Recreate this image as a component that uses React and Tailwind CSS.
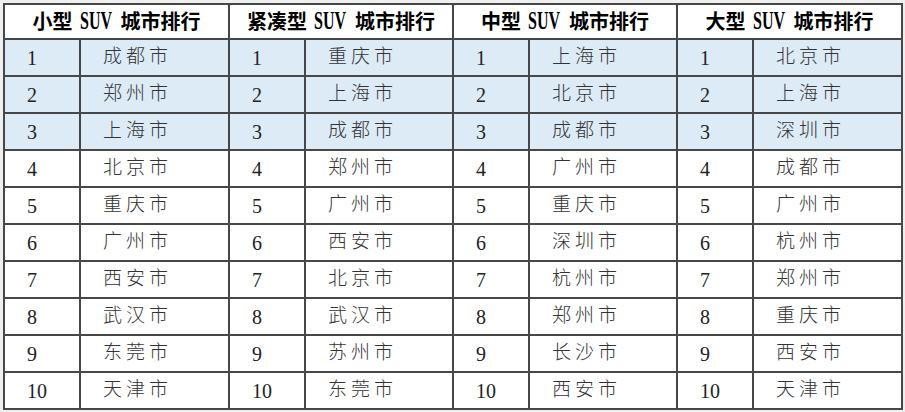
const groups = [
  {
    pre: "小型",
    cities: ["成都市", "郑州市", "上海市", "北京市", "重庆市", "广州市", "西安市", "武汉市", "东莞市", "天津市"],
  },
  {
    pre: "紧凑型",
    cities: ["重庆市", "上海市", "成都市", "郑州市", "广州市", "西安市", "北京市", "武汉市", "苏州市", "东莞市"],
  },
  {
    pre: "中型",
    cities: ["上海市", "北京市", "成都市", "广州市", "重庆市", "深圳市", "杭州市", "郑州市", "长沙市", "西安市"],
  },
  {
    pre: "大型",
    cities: ["北京市", "上海市", "深圳市", "成都市", "广州市", "杭州市", "郑州市", "重庆市", "西安市", "天津市"],
  },
];

const font = { fontFamily: '"Liberation Serif", "Noto Sans CJK SC", serif' };

const App = () => {
  const rows = Array.from({ length: 10 }, (_, i) => i);
  const cell = "border-2 border-[#474747] pl-[22px] text-left align-middle";

  return (
    <div className="w-[905px] h-[412px] bg-[#efefef] pt-[3px] pl-[3px]" style={font}>
      <table className="w-[898px] border-collapse table-fixed bg-white">
        <colgroup>
          <col className="w-[76px]" />
          <col className="w-[149px]" />
          <col className="w-[76px]" />
          <col className="w-[148px]" />
          <col className="w-[76px]" />
          <col className="w-[148px]" />
          <col className="w-[76px]" />
          <col className="w-[149px]" />
        </colgroup>
        <thead>
          <tr className="h-[35px]">
            {groups.map((g) => (
              <th
                key={g.pre}
                colSpan={2}
                className="border-2 border-[#474747] text-center text-[20px] font-bold text-black whitespace-nowrap"
              >
                {g.pre}
                <span className="inline-block ml-[6px] mr-[8px] leading-none">
                  <span className="inline-block -mx-[8px] scale-x-[0.64] text-[25px] font-bold">SUV</span>
                </span>
                城市排行
              </th>
            ))}
          </tr>
        </thead>
        <tbody>
          {rows.map((i) => (
            <tr key={i} className={`h-[37px] ${i < 3 ? "bg-[#ddebf7]" : ""}`}>
              {groups.map((g) => [
                <td key={g.pre + "n"} className={`${cell} text-[20px] text-[#222]`}>
                  {i + 1}
                </td>,
                <td key={g.pre + "c"} className={`${cell} text-[19px] font-light text-[#333] tracking-[4px]`}>
                  {g.cities[i]}
                </td>,
              ])}
            </tr>
          ))}
        </tbody>
      </table>
    </div>
  );
};

export default App;
